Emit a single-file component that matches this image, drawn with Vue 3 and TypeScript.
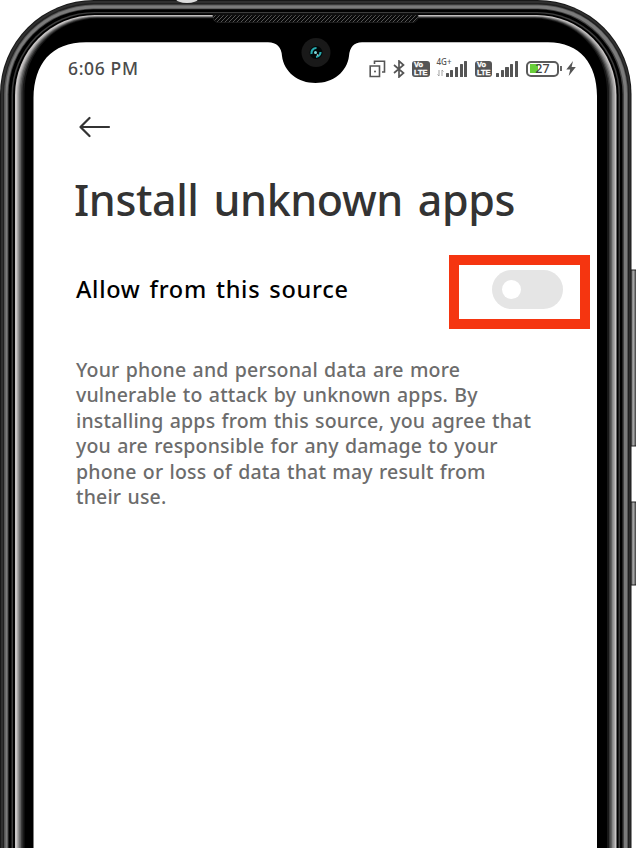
<script setup lang="ts">
interface Layer { left: number; top: number; right: number; radius: number; color: string }

const layers: Layer[] = [
  { left: 0, top: 0, right: 631.5, radius: 94, color: '#181818' },
  { left: 1, top: 1, right: 630.5, radius: 93, color: '#303030' },
  { left: 3, top: 3, right: 629, radius: 91, color: '#202020' },
  { left: 4, top: 4.5, right: 628, radius: 90, color: '#555' },
  { left: 5.5, top: 5.5, right: 627, radius: 88, color: '#7b7b7b' },
  { left: 7.5, top: 8.5, right: 624, radius: 86, color: '#444' },
  { left: 8.5, top: 9.3, right: 622.5, radius: 85, color: '#000' },
  { left: 11.5, top: 12, right: 620, radius: 83, color: '#3c3c3c' },
  { left: 13, top: 13.2, right: 618.5, radius: 82, color: '#000' },
  { left: 15, top: 15, right: 616.5, radius: 80, color: '#c8c5c5' },
  { left: 17, top: 15.7, right: 615, radius: 79, color: '#aaa8a8' },
  { left: 18.3, top: 16.3, right: 613.5, radius: 78, color: '#858585' },
  { left: 19.5, top: 16.8, right: 612, radius: 77, color: '#606060' },
  { left: 21, top: 17.3, right: 610.5, radius: 76, color: '#3a3a3a' },
  { left: 22.5, top: 17.8, right: 609, radius: 75, color: '#181818' },
  { left: 24.5, top: 18.5, right: 607, radius: 73, color: '#000' },
]

const lines: string[] = [
  'Your phone and personal data are more',
  'vulnerable to attack by unknown apps. By',
  'installing apps from this source, you agree that',
  'you are responsible for any damage to your',
  'phone or loss of data that may result from',
  'their use.',
]
const bars = [4, 6.5, 9.5, 12.5, 15.5]
</script>

<template>
  <main class="phone">
    <svg class="frame" viewBox="0 0 636 848" aria-hidden="true">
      <defs>
        <pattern id="mesh" width="4" height="4" patternUnits="userSpaceOnUse">
          <rect width="4" height="4" fill="#080808" />
          <path d="M0 3L3 0M2 5L5 2" stroke="#555" stroke-width="1" />
        </pattern>
        <linearGradient id="key"><stop offset="0" stop-color="#222" /><stop offset=".55" stop-color="#aaa" /><stop offset="1" stop-color="#333" /></linearGradient>
      </defs>
      <g stroke="#222" stroke-width="1.2" fill="url(#key)">
        <rect x="629.5" y="270" width="7" height="176" rx="1.5" />
        <rect x="629.5" y="502" width="7" height="83" rx="1.5" />
      </g>
      <rect
        v-for="(l, i) in layers" :key="i" :x="l.left" :y="l.top"
        :width="l.right - l.left" height="1100" :rx="l.radius" :fill="l.color"
      />
      <ellipse cx="187" cy="-1" rx="11" ry="4" fill="#ddd" />
      <path d="M213 15H418V18Q417 22.5 412 22.5H219Q214 22.5 213 18Z" fill="url(#mesh)" stroke="#222" stroke-width=".7" />
      <path
        d="M33.5 848V98C34 64 51 42.3 86 42.3H268Q281 42.5 282 56C284 72 298 83 315.5 83S347 72 349 56Q350 42.5 362 42.3H548C580 42.3 597 64 597 96V848Z"
        fill="#fff"
      />
      <circle cx="316" cy="52.5" r="14.5" fill="#191919" />
      <circle cx="316" cy="52.5" r="6.5" fill="#020808" />
      <path d="M311.5 54A5 5 0 0 1 316.5 48M320.5 52A5 5 0 0 1 316 57" fill="none" stroke="#28a9ad" stroke-width="2.2" />
      <circle cx="315.5" cy="52.5" r="1.5" fill="#7bdadb" />
      <circle cx="317.5" cy="55" r=".8" fill="#ddd" />
    </svg>

    <section class="screen">
      <header class="status">
        <time class="clock">6:06 PM</time>
        <div class="indicators">
          <svg class="copy" viewBox="0 0 17 18" fill="none" stroke="#555" stroke-width="1.6">
            <path d="M5.5 4V1.2H15.5V12H13M1.2 6H10.5V16.5H1.2Z" /><circle cx="6" cy="11.5" r="1" fill="#555" stroke="none" />
          </svg>
          <svg class="bluetooth" viewBox="0 0 12 18" fill="none" stroke="#555" stroke-width="1.7">
            <path d="M1 5L10.5 13L6 17V1L10.5 5L1 13" />
          </svg>
          <span class="volte"><b>Vo</b><b>LTE</b></span>
          <span class="network"><span>4G+</span>
            <svg viewBox="0 0 7 8" fill="none" stroke="#999" stroke-width=".9"><path d="M2 1V7L.5 5.5M5 7V1L6.5 2.5" /></svg>
          </span>
          <span class="signal first"><i v-for="h in bars" :key="h" :style="{ height: h + 'px' }"></i></span>
          <span class="volte"><b>Vo</b><b>LTE</b></span>
          <span class="signal second"><i v-for="h in bars" :key="h" :style="{ height: h + 'px' }"></i></span>
          <span class="battery"><i class="charge"></i><span>27</span></span>
          <i class="terminal"></i>
          <svg class="bolt" viewBox="0 0 10 15"><path d="M7 0L.3 8.5H4.2L2.7 15L9.8 6H5.6Z" fill="#555" /></svg>
        </div>
      </header>
      <button class="back" aria-label="Back">
        <svg viewBox="0 0 32 22" fill="none" stroke="#333" stroke-width="2.2" stroke-linecap="round" stroke-linejoin="round"><path d="M30 11H1.5M10.5 2L1.5 11L10.5 20" /></svg>
      </button>
      <h1>Install unknown apps</h1>
      <div class="setting">
        <span class="label">Allow from this source</span>
        <div class="highlight"><button class="toggle" role="switch" aria-checked="false" aria-label="Allow from this source"><i></i></button></div>
      </div>
      <p class="notice"><span v-for="(line, i) in lines" :key="i">{{ line }}</span></p>
    </section>
  </main>
</template>

<style>
body { background: #fff; overflow: hidden; }
</style>
<style scoped>
* { box-sizing: border-box; }
.phone { position: relative; width: 636px; height: 848px; overflow: hidden; font-family: "Noto Sans", sans-serif; }
.frame { position: absolute; inset: 0; width: 636px; height: 848px; }
.screen { position: relative; padding: 56px 46px 0 68px; display: flex; flex-direction: column; }
button { border: 0; padding: 0; background: none; }
.status { height: 25px; display: flex; align-items: center; justify-content: space-between; padding-right: 14px; }
.clock { font-size: 17.5px; line-height: 24px; margin-top: -2px; font-weight: 500; letter-spacing: .65px; color: #4b4b4b; white-space: nowrap; }
.indicators { display: flex; align-items: center; height: 25px; width: 207px; }
.indicators > * { flex: none; }
.copy { width: 17px; height: 18px; }
.bluetooth { width: 12px; height: 18px; margin-left: 7px; }
.volte { width: 17.5px; height: 16px; margin-left: 7px; border-radius: 3px; background: #555; color: #fff; display: flex; flex-direction: column; padding-left: 2px; font: 700 7px/8px "Liberation Sans", sans-serif; -webkit-text-stroke: .3px #fff; white-space: nowrap; }
.volte b { height: 8px; width: 13px; transform: scaleX(1.06); transform-origin: left; }
.network { width: 16px; height: 22px; margin-left: 7px; margin-top: -2px; display: flex; flex-direction: column; color: #555; font-size: 8px; line-height: 9px; font-weight: 500; }
.network svg { width: 7px; height: 8px; margin-top: 3px; }
.signal { width: 22px; height: 16px; display: flex; align-items: flex-end; gap: 1.5px; }
.signal i { width: 3.2px; background: #555; border-radius: .5px; }
.signal.first { margin-left: -7px; }
.signal.second { margin-left: 4px; }
.battery { position: relative; width: 33px; height: 16px; margin-left: 8px; border: 2px solid #5b5b5b; border-radius: 5px; padding: 1.5px; color: #444; font-size: 12.5px; line-height: 11px; font-weight: 500; text-align: center; }
.battery span { position: absolute; left: 0; right: 0; top: .5px; }
.charge { display: block; width: 8px; height: 9px; background: #67ce38; }
.terminal { width: 2px; height: 5px; margin-left: 1px; background: #666; }
.bolt { width: 10px; height: 15px; margin-left: 4px; }
.back { width: 32px; height: 22px; margin: 35px 0 0 11px; }
.back svg { display: block; width: 32px; height: 22px; }
h1 { margin: 32px 0 0 6px; height: 60px; font-size: 43px; line-height: 60px; font-weight: 500; color: #333; letter-spacing: -.4px; word-spacing: 4.2px; white-space: nowrap; }
.setting { margin: 25px -40px 0 8px; height: 74px; width: 514px; display: flex; align-items: center; justify-content: space-between; }
.label { font-size: 23.5px; line-height: 34px; font-weight: 500; color: #000; margin-top: -7px; white-space: nowrap; letter-spacing: .72px; word-spacing: 2.2px; }
.highlight { width: 141px; height: 74px; border: 10px solid #f53510; background: #fff; display: flex; align-items: center; padding-left: 33px; }
.toggle { width: 71px; height: 39px; margin-top: -5px; border-radius: 20px; background: #e5e5e5; padding-left: 10px; display: flex; align-items: center; }
.toggle i { width: 19px; height: 19px; border-radius: 50%; background: #fff; }
.notice { margin: 28px 0 0 8px; display: flex; flex-direction: column; font-size: 19.5px; line-height: 25.4px; font-weight: 500; color: #6c6c6c; white-space: nowrap; align-items: flex-start; letter-spacing: .18px; word-spacing: 1px; }
</style>
